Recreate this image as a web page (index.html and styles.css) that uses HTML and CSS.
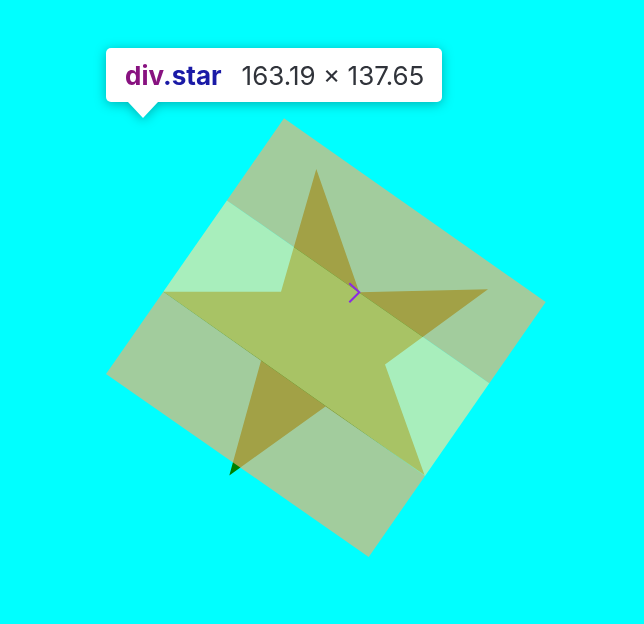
FILE: index.html
```html
<!DOCTYPE html>
<html>
<head>
<meta charset="utf-8">
<link rel="stylesheet" href="styles.css">
</head>
<body>
<div class="stage">
  <svg class="canvas" width="644" height="624" viewBox="0 0 644 624">
    <polygon class="star" points="316.3,169 359.3,292.3 488,289.3 385,364.5 424.5,475 325.5,406.5 229.3,475.5 261,360.7 163.3,291.7 281,291.7"/>
    <polygon class="margin" points="284,118.3 545.7,302 489.3,383.3 226.9,200.4"/>
    <polygon class="border" points="226.9,200.4 489.3,383.3 425,475.9 163.3,291.7"/>
    <polygon class="margin" points="163.3,291.7 425,475.9 368.7,557 106,374"/>
    <polyline class="chevron" points="349.3,283.3 359.3,292.3 349.3,302.3"/>
  </svg>
  <div class="tooltip">
    <div class="tooltip-box">
      <span class="tag"><span class="tag-name">div</span><span class="tag-class">.star</span></span>
      <span class="dims">163.19 × 137.65</span>
    </div>
    <div class="tooltip-arrow"></div>
  </div>
</div>
</body>
</html>
```

FILE: styles.css
```css
html, body {
  margin: 0;
  padding: 0;
  background: #00ffff;
}

.stage {
  position: relative;
  width: 644px;
  height: 624px;
  overflow: hidden;
}

.canvas {
  display: block;
}

.star {
  fill: #008000;
}

.margin {
  fill: rgba(246, 178, 107, 0.66);
}

.border {
  fill: rgba(255, 229, 153, 0.66);
}

.chevron {
  fill: none;
  stroke: #8a2be2;
  stroke-width: 2;
}

.tooltip {
  position: absolute;
  left: 106px;
  top: 48px;
  display: flex;
  flex-direction: column;
  filter: drop-shadow(0 2px 6px rgba(0, 0, 0, 0.3));
}

.tooltip-box {
  display: flex;
  align-items: center;
  gap: 20px;
  height: 54px;
  padding: 0 18px 0 19px;
  background: #ffffff;
  border-radius: 5px;
  font-family: Inter, "Noto Sans", sans-serif;
  font-size: 26px;
  white-space: nowrap;
}

.tag {
  font-weight: 700;
}

.tag-name {
  color: #881280;
}

.tag-class {
  color: #1a1aa6;
}

.dims {
  color: #30333a;
}

.tooltip-arrow {
  width: 0;
  height: 0;
  margin-left: 22px;
  border-left: 15px solid transparent;
  border-right: 15px solid transparent;
  border-top: 16px solid #ffffff;
}
```
